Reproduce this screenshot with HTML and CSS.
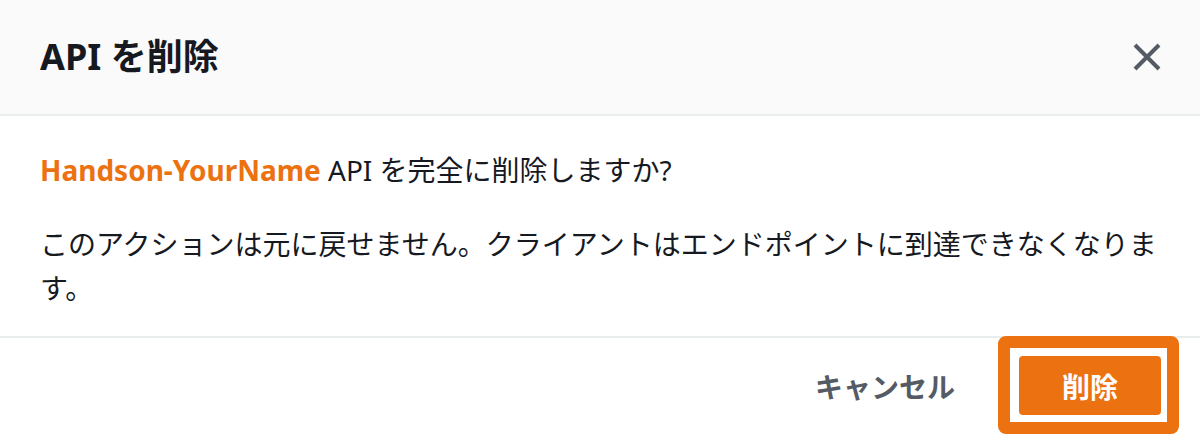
FILE: index.html
```html
<!DOCTYPE html>
<html lang="ja">
<head>
<meta charset="utf-8">
<link rel="stylesheet" href="styles.css">
</head>
<body>
<div class="modal">
  <header class="modal-header">
    <h2 class="modal-title">API を削除</h2>
    <button class="close" aria-label="閉じる">
      <svg width="28" height="28" viewBox="0 0 28 28"><path d="M2 2 L26 26 M26 2 L2 26" stroke="#545b64" stroke-width="4" fill="none"/></svg>
    </button>
  </header>
  <div class="modal-body">
    <p><span class="api-name">Handson-YourName</span> API を完全に削除しますか?</p>
    <p>このアクションは元に戻せません。クライアントはエンドポイントに到達できなくなります。</p>
  </div>
  <footer class="modal-footer">
    <button class="btn-link">キャンセル</button>
    <span class="highlight">
      <button class="btn-primary">削除</button>
      <span class="mark"></span>
    </span>
  </footer>
</div>
</body>
</html>
```
FILE: styles.css
```css
html, body {
  margin: 0;
  padding: 0;
  background: #ffffff;
}
body {
  font-family: "Noto Sans", "Noto Sans CJK JP", sans-serif;
  color: #16191f;
  width: 1200px;
  height: 438px;
  overflow: hidden;
}
.modal {
  display: flex;
  flex-direction: column;
}
.modal-header {
  height: 116px;
  box-sizing: border-box;
  background: #fafafa;
  border-bottom: 2px solid #eaeded;
  display: flex;
  align-items: center;
  justify-content: space-between;
  padding: 0 40px;
}
.modal-title {
  margin: 0;
  font-size: 36px;
  line-height: 44px;
  font-weight: 700;
  color: #16191f;
}
.close {
  border: 0;
  background: none;
  padding: 0;
  width: 28px;
  height: 28px;
  margin-right: -1px;
  display: flex;
}
.modal-body {
  padding: 32px 30px 26px 40px;
  font-size: 28px;
  line-height: 44px;
}
.modal-body p {
  margin: 0 0 30px 0;
}
.modal-body p:last-child {
  margin-bottom: 0;
}
.api-name {
  color: #ec7211;
  font-weight: 700;
}
.modal-footer {
  border-top: 2px solid #eaeded;
  display: flex;
  justify-content: flex-end;
  align-items: center;
  padding: 18px 39px 0 0;
  gap: 44px;
}
.btn-link {
  border: 0;
  background: none;
  font-family: inherit;
  font-size: 28px;
  font-weight: 700;
  color: #545b64;
  padding: 0 20px;
  height: 59px;
}
.highlight {
  position: relative;
  display: flex;
}
.btn-primary {
  border: 0;
  background: #ec7211;
  color: #ffffff;
  font-family: inherit;
  font-size: 28px;
  font-weight: 700;
  width: 142px;
  height: 59px;
  border-radius: 4px;
  padding: 0;
}
.mark {
  position: absolute;
  top: -20px;
  bottom: -19px;
  left: -21px;
  right: -18px;
  border: 12px solid #ec7211;
  border-radius: 8px;
  pointer-events: none;
}
```
